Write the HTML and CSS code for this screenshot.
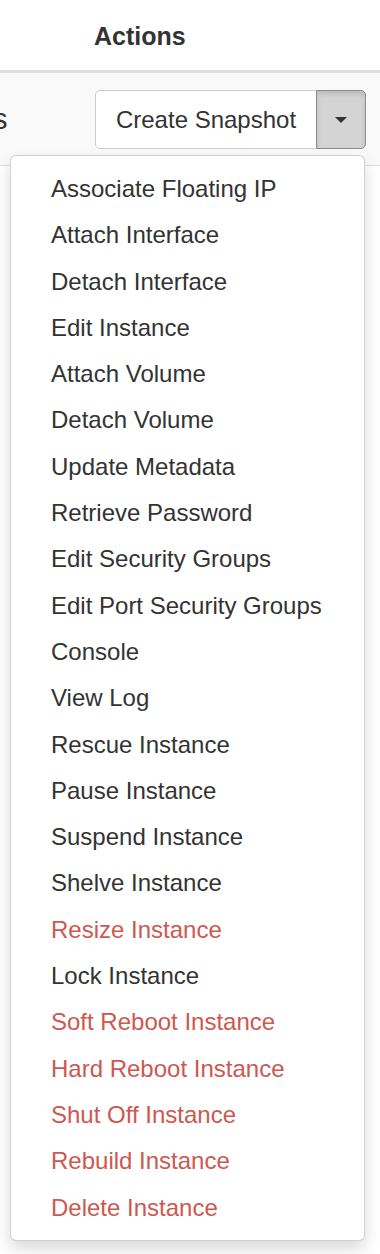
FILE: index.html
```html
<!DOCTYPE html>
<html>
<head>
<meta charset="utf-8">
<link rel="stylesheet" href="styles.css">
</head>
<body>
<div class="table">
  <div class="thead">
    <div class="th">Actions</div>
  </div>
  <div class="tr">
    <div class="cell-prev">s</div>
    <div class="btn-group">
      <button class="btn">Create Snapshot</button>
      <button class="btn caret-btn"><span class="caret"></span></button>
    </div>
  </div>
  <ul class="menu">
    <li>Associate Floating IP</li>
    <li>Attach Interface</li>
    <li>Detach Interface</li>
    <li>Edit Instance</li>
    <li>Attach Volume</li>
    <li>Detach Volume</li>
    <li>Update Metadata</li>
    <li>Retrieve Password</li>
    <li>Edit Security Groups</li>
    <li>Edit Port Security Groups</li>
    <li>Console</li>
    <li>View Log</li>
    <li>Rescue Instance</li>
    <li>Pause Instance</li>
    <li>Suspend Instance</li>
    <li>Shelve Instance</li>
    <li class="danger">Resize Instance</li>
    <li>Lock Instance</li>
    <li class="danger">Soft Reboot Instance</li>
    <li class="danger">Hard Reboot Instance</li>
    <li class="danger">Shut Off Instance</li>
    <li class="danger">Rebuild Instance</li>
    <li class="danger">Delete Instance</li>
  </ul>
</div>
</body>
</html>
```

FILE: styles.css
```css
html, body {
  margin: 0;
  padding: 0;
  background: #fff;
}
body {
  width: 380px;
  height: 1254px;
  overflow: hidden;
  font-family: "Liberation Sans", Arial, sans-serif;
  color: #333;
}
.table {
  position: relative;
}
.thead {
  height: 70px;
  display: flex;
  align-items: center;
  padding-top: 2px;
  box-sizing: border-box;
}
.th {
  padding-left: 94px;
  font-weight: bold;
  font-size: 25px;
  color: #333;
}
.tr {
  height: 96px;
  box-sizing: border-box;
  border-top: 3px solid #ddd;
  border-bottom: 1px solid #ddd;
  background: #f9f9f9;
  display: flex;
  align-items: flex-start;
  padding-top: 17px;
}
.cell-prev {
  width: 102px;
  flex: none;
  font-size: 29px;
  line-height: 59px;
  margin-left: -7px;
  color: #333;
}
.btn-group {
  display: flex;
  height: 59px;
}
.btn {
  font-family: "Liberation Sans", Arial, sans-serif;
  font-size: 24px;
  color: #333;
  background: #fff;
  border: 1px solid #ccc;
  border-radius: 5px 0 0 5px;
  padding: 0;
  box-sizing: border-box;
  white-space: nowrap;
  text-align: center;
  height: 59px;
  width: 222px;
  margin: 0;
  flex: none;
}
.caret-btn {
  width: 50px;
  padding: 0;
  margin-left: -1px;
  border-radius: 0 5px 5px 0;
  background: #d4d4d4;
  border-color: #8c8c8c;
  box-shadow: inset 0 3px 5px rgba(0, 0, 0, 0.125);
  display: flex;
  align-items: center;
  justify-content: center;
}
.caret {
  width: 0;
  height: 0;
  border-left: 6px solid transparent;
  border-right: 6px solid transparent;
  border-top: 6px solid #333;
  margin-top: 1px;
}
.menu {
  position: absolute;
  top: 155px;
  left: 10px;
  width: 355px;
  box-sizing: border-box;
  margin: 0;
  padding: 10px 0 9px;
  list-style: none;
  background: #fff;
  border: 1px solid rgba(0, 0, 0, 0.18);
  border-radius: 6px;
  box-shadow: 0 8px 16px rgba(0, 0, 0, 0.15);
}
.menu li {
  padding-left: 40px;
  font-size: 24px;
  line-height: 46.3px;
  height: 46.3px;
  white-space: nowrap;
  color: #333;
}
.menu li.danger {
  color: #cd5850;
}
```
